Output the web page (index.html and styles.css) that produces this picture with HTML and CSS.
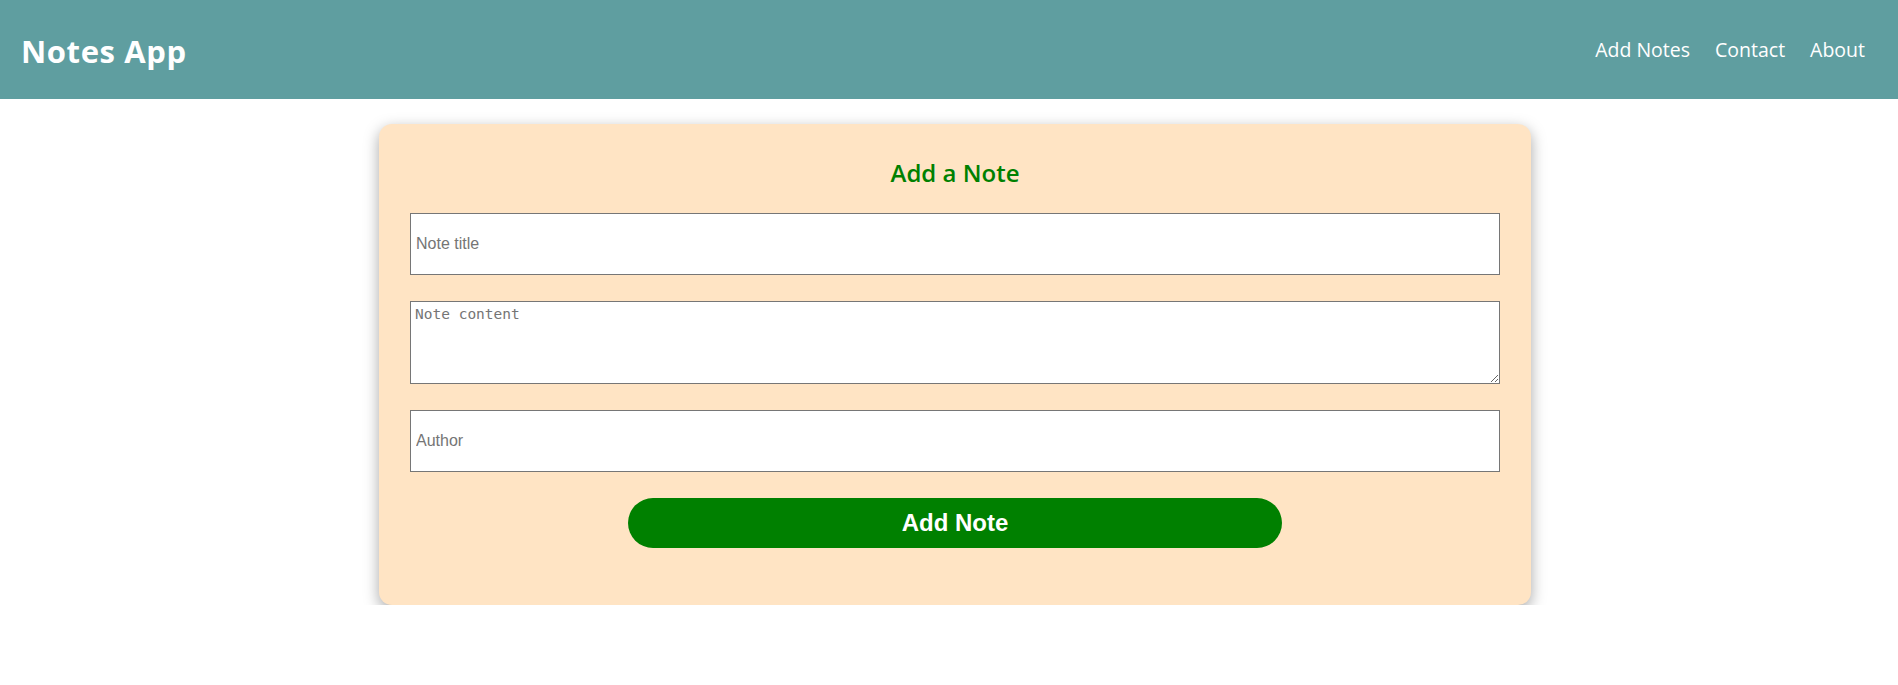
FILE: index.html
```html
<!DOCTYPE html>
<html lang="en">
<head>
<meta charset="utf-8">
<title>Notes App</title>
<link rel="stylesheet" href="styles.css">
</head>
<body>
<header class="topbar">
  <div class="brand">Notes App</div>
  <nav class="nav">
    <a href="#" class="nav-link">Add Notes</a>
    <a href="#" class="nav-link">Contact</a>
    <a href="#" class="nav-link">About</a>
  </nav>
</header>
<main class="main">
  <form class="card">
    <h2 class="card-title">Add a Note</h2>
    <input class="field" type="text" placeholder="Note title">
    <textarea class="field-area" placeholder="Note content"></textarea>
    <input class="field" type="text" placeholder="Author">
    <button class="submit" type="button">Add Note</button>
  </form>
</main>
</body>
</html>
```
FILE: styles.css
```css
* { box-sizing: border-box; }
body {
  margin: 0;
  font-family: "Open Sans", "Noto Sans", sans-serif;
  background: #ffffff;
}
.topbar {
  height: 99px;
  background: #5f9ea0;
  display: flex;
  align-items: center;
  justify-content: space-between;
  padding: 0 33px 0 21px;
}
.brand {
  color: #ffffff;
  font-size: 31px;
  font-weight: 700;
  letter-spacing: 0.6px;
  margin-top: 2px;
}
.nav {
  display: flex;
  gap: 25px;
}
.nav-link {
  color: #ffffff;
  text-decoration: none;
  font-size: 19.5px;
}
.main {
  display: flex;
  justify-content: center;
  padding: 25px 0 0 12px;
}
.card {
  width: 1152px;
  background: #ffe4c4;
  border-radius: 13px;
  box-shadow: 0 5px 15px rgba(0, 0, 0, 0.35);
  padding: 33px 31px 57px;
  display: flex;
  flex-direction: column;
  gap: 26px;
}
.card-title {
  margin: 0 0 -2px;
  text-align: center;
  color: #008000;
  font-size: 24px;
  font-weight: 600;
  line-height: 32px;
}
.field {
  height: 62px;
  width: 100%;
  border: 1px solid #767676;
  border-radius: 0;
  padding: 0 5px;
  font-family: "Liberation Sans", Arial, sans-serif;
  font-size: 16px;
  background: #ffffff;
}
.field::placeholder, .field-area::placeholder { color: #757575; }
.field-area {
  height: 83px;
  width: 100%;
  border: 1px solid #767676;
  padding: 4px;
  font-family: "DejaVu Sans Mono", monospace;
  font-size: 14.5px;
  background: #ffffff;
  display: block;
}
.submit {
  align-self: center;
  width: 654px;
  height: 50px;
  border: none;
  border-radius: 25px;
  background: #008000;
  color: #ffffff;
  font-family: "Liberation Sans", Arial, sans-serif;
  font-weight: 700;
  font-size: 24px;
}
```
